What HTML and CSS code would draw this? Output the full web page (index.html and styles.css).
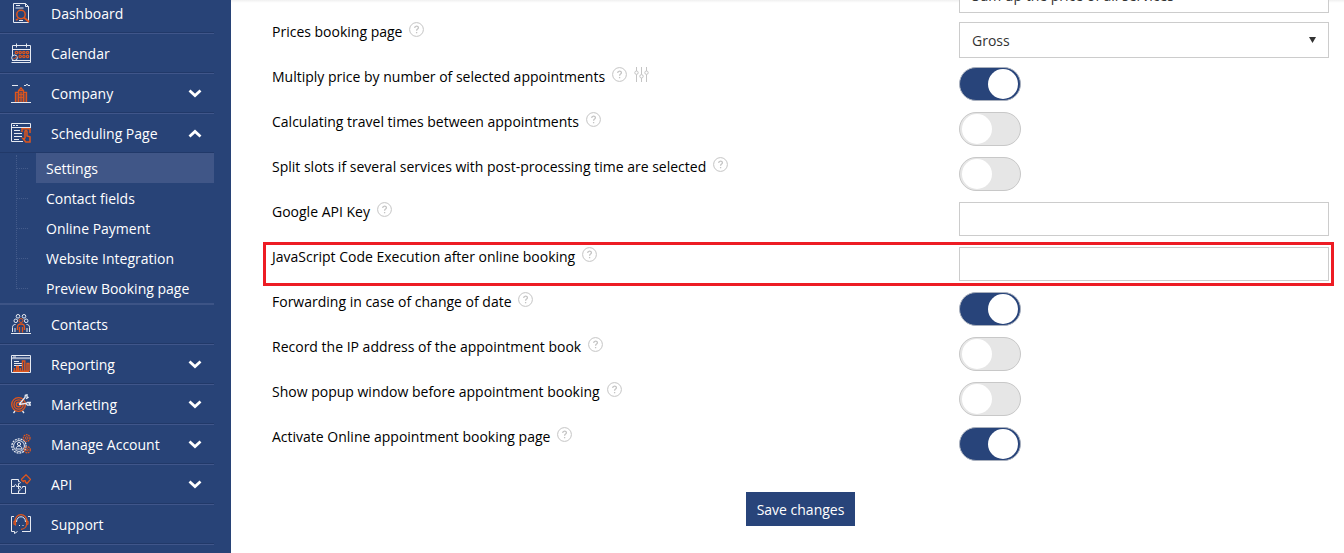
FILE: index.html
```html
<!doctype html>
<html lang="en">
<head>
<meta charset="utf-8">
<title>Scheduling Page - Settings</title>
<link rel="stylesheet" href="styles.css">
</head>
<body>

<svg class="defs">
  <symbol id="help" viewBox="0 0 15 15">
    <circle cx="7.5" cy="7.5" r="6.9"/>
    <path d="M5.7 5.9c0-2.4 3.7-2.3 3.7-.2 0 1.4-1.8 1.4-1.8 3M7.6 9.9v1.3" stroke-width="1.3"/>
  </symbol>
  <symbol id="down" viewBox="0 0 14 9">
    <path d="M1.500 1.500l5.500 5 5.500-5"/>
  </symbol>
  <symbol id="up" viewBox="0 0 14 9">
    <path d="M1.500 7.500l5.500-5 5.500 5"/>
  </symbol>
</svg>

<aside class="sidebar">
<ul class="menu">
<li><a href="#">
  <svg class="icon" viewBox="0 0 20 20"><path d="M2.5.5h12l3 3v16h-15zM14.5.5v3h3M5 2.500h4M4.5 5h8"/><g class="o"><circle cx="10" cy="11.5" r="4.2" stroke-width="1.5"/><path d="M7 16l-2 1M13 14.5l5 4.5" stroke-width="1.8"/></g><path d="M8 17.5h4"/></svg>
  <span>Dashboard</span></a></li>
<li><a href="#">
  <svg class="icon" viewBox="0 0 20 20"><path d="M1.5 13V2.5h18v17H.5M2 6.5h17M5.5.5v4M15.5.5v4M1 17.5h18"/><g class="o" stroke-width="1.2"><circle cx="5.500" cy="9.5" r="1.2"/><circle cx="9.2" cy="9.5" r="1.2"/><circle cx="12.900" cy="9.5" r="1.2"/><circle cx="16.600" cy="9.5" r="1.2"/><circle cx="9.2" cy="13.5" r="1.2"/><circle cx="12.900" cy="13.5" r="1.2"/><circle cx="16.600" cy="13.5" r="1.2"/></g><circle cx="3.5" cy="14.8" r="2.8"/><path class="o" d="M2.5 15l1 1 2.5-3"/></svg>
  <span>Calendar</span></a></li>
<li><a href="#">
  <svg class="icon" viewBox="0 0 20 20"><path d="M1 2.5h6M13 2.5h2l1-1.5 1 1.5h2M0 19.5h20"/><g class="o" stroke-width="1.3"><path d="M4.5 19V9.5h3M15.5 19V9.5h-3M7.5 19V7.500l2.5-2.5 2.5 2.500V19M7.5 7.500h5M10 6V4"/><path d="M9.200 9v10M10.800 9v10" stroke-width="1"/><path d="M8 11.500h4M8 14.500h4M6 11v8M14 11v8" stroke-width=".8"/></g></svg>
  <span>Company</span><svg class="arrow"><use href="#down"/></svg></a></li>
<li class="open"><a href="#">
  <svg class="icon" viewBox="0 0 20 20"><path d="M12 18.5H.5V.5h19V5M.5 4.5h19M2 2.5h2M5 2.5h2M3 7.5h6M3 10.5h8M3 13.5h8M3 16.5h5"/><path class="o" stroke-width="1.5" d="M11 9V5.7h8V10M14 15.5V8.5c0-1.200 2-1.200 2 0v4.500l3 .8v5.2h-4.200l-2.8-3.5 2 .5"/></svg>
  <span>Scheduling Page</span><svg class="arrow"><use href="#up"/></svg></a>
  <ul class="submenu">
  <li class="active"><a href="#">Settings</a></li>
  <li><a href="#">Contact fields</a></li>
  <li><a href="#">Online Payment</a></li>
  <li><a href="#">Website Integration</a></li>
  <li><a href="#">Preview Booking page</a></li>
  </ul></li>
<li><a href="#">
  <svg class="icon" viewBox="0 0 20 20"><circle cx="7" cy="2.3" r="1.8"/><circle cx="13" cy="2.3" r="1.8"/><circle cx="4.8" cy="6.8" r="1.8"/><circle cx="15.2" cy="6.8" r="1.8"/><path d="M1.5 18v-4.5c0-2 1-3 3-3M18.5 18v-4.5c0-2-1-3-3-3M4 14v4M16 14v4M0 19.5h20"/><g class="o"><circle cx="10" cy="6.5" r="2"/><path d="M6.5 16v-3c0-2 1.2-3 3.5-3s3.5 1 3.5 3v3M8.5 13v5.5M11.5 13v5.5" stroke-width="1.3"/></g></svg>
  <span>Contacts</span></a></li>
<li><a href="#">
  <svg class="icon" viewBox="0 0 20 20"><path d="M.5 1.5h19v17H.5zM2 3h3"/><path d="M1 4.2h18" stroke-width="2" opacity=".65"/><path d="M3 7.5h5M3 9.5h8M3 11.5h8"/><path class="o" stroke-width="1.4" d="M2 17.3h16M3.5 17v-3M5.7 17v-4.500h1.6V17M9.300 17v-3M11.5 17V7h2.3v10M16 17V9.5h2V17"/></svg>
  <span>Reporting</span><svg class="arrow"><use href="#down"/></svg></a></li>
<li><a href="#">
  <svg class="icon" viewBox="0 0 20 20"><g class="o" stroke-width="1.4"><circle cx="7.6" cy="10.5" r="6.9"/><circle cx="7.6" cy="10.5" r="4.6"/><circle cx="7.6" cy="10.5" r="2.3"/></g><path d="M8 10.5l6-7 .3-2.2L16 .8v2l1 .5-1.8 1.5M8 10.5l7-1 1.5-1h3l-1.2 1.2 1.2 1.5h-3L15 9.5M4 17l-1.5 2M11.5 17l1.500 2" stroke-width="1.3"/></svg>
  <span>Marketing</span><svg class="arrow"><use href="#down"/></svg></a></li>
<li><a href="#">
  <svg class="icon" viewBox="0 0 20 20"><circle cx="8" cy="12" r="7.1" stroke-dasharray="2 .9" stroke-width="1.3"/><circle cx="8" cy="12" r="5.400"/><circle cx="8" cy="10" r="1.6"/><path d="M5 15c0-4 6-4 6 0z"/><g class="o"><circle cx="15.7" cy="4" r="3.3" stroke-dasharray="1.7 .7" stroke-width="1.3"/><circle cx="15.7" cy="4" r="1.3"/><circle cx="16.3" cy="15.8" r="3" stroke-dasharray="1.7 .7" stroke-width="1.3"/><circle cx="16.3" cy="15.8" r="1"/></g></svg>
  <span>Manage Account</span><svg class="arrow"><use href="#down"/></svg></a></li>
<li><a href="#">
  <svg class="icon" viewBox="0 0 20 20"><path d="M.5 5.5h7v2.2c2.400-1 2.400 2.6 0 1.8v3h-2c.8-2.500-2.8-2.500-2 0h-3zM.5 12.500v7h14v-7h-3c.8 2.300-2.8 2.300-2 0h-2v2.500c2.200-.8 2.200 2.400 0 1.700v2.800"/><path class="o" stroke-width="1.3" d="M10.5 5.2L15 .8l4.500 4.500-3.500 4.200-1.500-1.200c.5-1.800-1.500-2.300-2-.8l-1.600-1z"/></svg>
  <span>API</span><svg class="arrow"><use href="#down"/></svg></a></li>
<li><a href="#">
  <svg class="icon" viewBox="0 0 20 20"><path d="M3 2.5H.5v15H3.500v2l3-2M11 17.5h8.5v-15H17M5.5 8c0-7 9-7 9 0M8 11.5h1M11.5 11.5h1"/><path class="o" stroke-width="1.2" d="M4 8C4-1.800 16-1.800 16 8M4.5 6.500l-1.500 1v2.500l1.500 1zM15.5 6.500l1.500 1v2.500l-1.500 1zM15.500 11c-.5 2.500-2.500 4-5.500 4.300"/></svg>
  <span>Support</span></a></li>
</ul>
</aside>

<main>
<form class="settings">
<div class="row">
  <label></label>
  <div class="select">Sum up the price of all services</div>
</div>
<div class="row">
  <label>Prices booking page</label><svg class="help"><use href="#help"/></svg>
  <div class="select">Gross<i></i></div>
</div>
<div class="row">
  <label>Multiply price by number of selected appointments</label><svg class="help"><use href="#help"/></svg>
  <svg class="sliders" viewBox="0 0 15 15"><path d="M2.500 0v4M2.500 7.500V15M7.500 0v7.500M7.500 11v4M12.500 0v4M12.500 7.500V15"/><circle cx="2.500" cy="5.700" r="1.700"/><circle cx="7.500" cy="9.300" r="1.700"/><circle cx="12.500" cy="5.700" r="1.700"/></svg>
  <div class="toggle on"></div>
</div>
<div class="row">
  <label>Calculating travel times between appointments</label><svg class="help"><use href="#help"/></svg>
  <div class="toggle"></div>
</div>
<div class="row">
  <label>Split slots if several services with post-processing time are selected</label><svg class="help"><use href="#help"/></svg>
  <div class="toggle"></div>
</div>
<div class="row">
  <label>Google API Key</label><svg class="help"><use href="#help"/></svg>
  <input type="text">
</div>
<div class="row marked">
  <label>JavaScript Code Execution after online booking</label><svg class="help"><use href="#help"/></svg>
  <input type="text">
</div>
<div class="row">
  <label>Forwarding in case of change of date</label><svg class="help"><use href="#help"/></svg>
  <div class="toggle on"></div>
</div>
<div class="row">
  <label>Record the IP address of the appointment book</label><svg class="help"><use href="#help"/></svg>
  <div class="toggle"></div>
</div>
<div class="row">
  <label>Show popup window before appointment booking</label><svg class="help"><use href="#help"/></svg>
  <div class="toggle"></div>
</div>
<div class="row">
  <label>Activate Online appointment booking page</label><svg class="help"><use href="#help"/></svg>
  <div class="toggle on"></div>
</div>
<button type="button">Save changes</button>
</form>
</main>

</body>
</html>
```
FILE: styles.css
```css
* {
  box-sizing: border-box;
}

body {
  display: flex;
  height: 553px;
  margin: 0;
  overflow: hidden;
  color: #000;
  background-color: #fff;
  font: 14px/20px "Open Sans", sans-serif;
}

ul {
  list-style: none;
  margin: 0;
  padding: 0;
}

svg {
  flex: none;
  fill: none;
}

.defs {
  position: absolute;
  width: 0;
  height: 0;
}

/* sidebar */

.sidebar {
  width: 231px;
  flex: none;
  background-color: #284377;
  overflow: hidden;
}

.menu {
  width: 214px;
  margin-top: -6px;
}

.menu a {
  color: #fff;
  text-decoration: none;
}

.menu > li {
  border-bottom: 1px solid #40568a;
}

.menu > li > a {
  display: flex;
  align-items: center;
  height: 39px;
  padding: 0 12px 0 11px;
  border-bottom: 1px solid #213969;
}

.menu > li > a > span {
  flex: 1;
  padding-top: 1px;
}

.icon {
  width: 20px;
  height: 20px;
  margin-right: 20px;
  stroke: #e6eaf2;
}

.icon .o {
  stroke: #e0561c;
}

.arrow {
  width: 14px;
  height: 9px;
  stroke: #fff;
  stroke-width: 2.8;
}

.menu > .open {
  border-bottom: 2px solid #3d5486;
}

.submenu {
  position: relative;
  padding-left: 36px;
}

.submenu::before {
  content: "";
  position: absolute;
  left: 16px;
  top: 2px;
  height: 134px;
  border-left: 1px dotted #445b8b;
}

.submenu li {
  position: relative;
  height: 30px;
  padding: 6px 0 0 10px;
}

.submenu li::before {
  content: "";
  position: absolute;
  left: -19px;
  top: 15px;
  width: 11px;
  border-top: 1px dotted #445b8b;
}

.submenu .active {
  background-color: #405687;
}

/* settings form */

main {
  flex: 1;
  padding: 0 15px 0 41px;
  overflow: hidden;
  position: relative;
}

main::before {
  content: "";
  position: absolute;
  left: 0;
  right: 0;
  top: 0;
  height: 3px;
  background: linear-gradient(rgba(0,0,0,.06), rgba(0,0,0,0));
}

.settings {
  margin-top: -23px;
  display: flex;
  flex-direction: column;
}

.row {
  display: flex;
  align-items: flex-start;
  height: 45px;
  position: relative;
}

.help {
  width: 15px;
  height: 15px;
  margin-left: 6.8px;
  stroke: #c4c4c4;
}

.sliders {
  width: 15px;
  height: 15px;
  margin-left: 7px;
  stroke: #c4c4c4;
}

.select, input {
  width: 370px;
  height: 34px;
  margin: 0 0 0 auto;
  border: 1px solid #ccc;
  background-color: #fff;
}

.select {
  display: flex;
  justify-content: space-between;
  height: 36px;
  padding: 8px 12px;
  color: #333;
}

.select i {
  margin-top: 6px;
  width: 7px;
  height: 6px;
  background-color: #333;
  clip-path: polygon(0 0, 100% 0, 50% 100%);
}

.toggle {
  width: 62px;
  height: 34px;
  margin: 0 308px 0 auto;
  padding: 1px 2px;
  border: 1px solid #c8c8c8;
  border-radius: 17px;
  background-color: #e6e6e6;
}

.toggle::before {
  content: "";
  display: block;
  width: 30px;
  height: 30px;
  border-radius: 50%;
  background-color: #fff;
}

.toggle.on {
  padding-left: 28px;
  border-color: #a9b0bd;
  background-color: #28447a;
}

.marked::after {
  content: "";
  position: absolute;
  left: -9px;
  right: -5px;
  top: -5px;
  height: 38px;
  border: 3px solid #ed1c24;
}

button {
  align-self: center;
  width: 109px;
  height: 34px;
  margin-top: 20px;
  padding: 2px 0 0;
  border: 0;
  color: #fff;
  background-color: #28447a;
  font: inherit;
}
```
